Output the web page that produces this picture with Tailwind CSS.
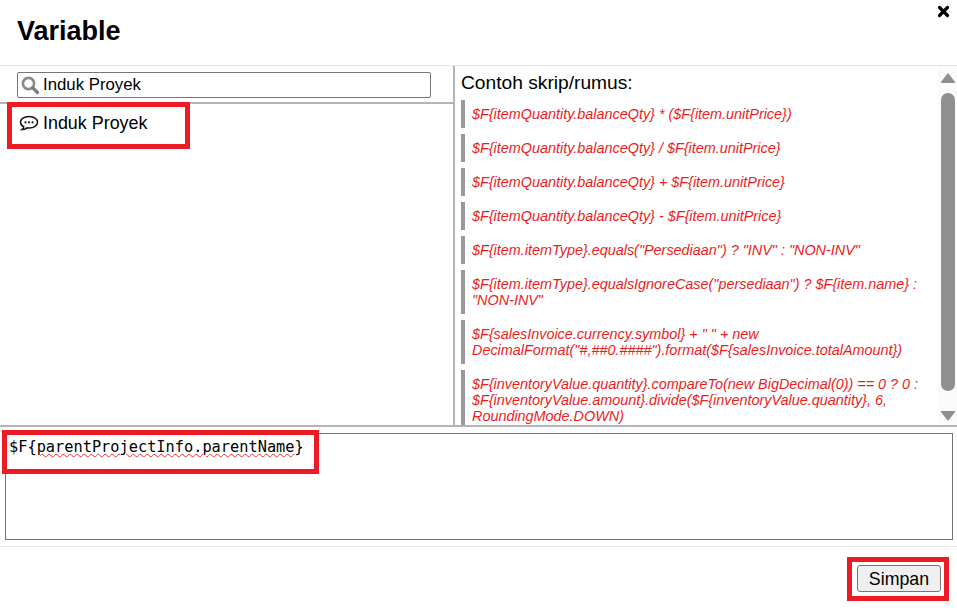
<!DOCTYPE html>
<html lang="en">
<head>
  <meta charset="UTF-8">
  <title>Variable</title>
  <script src="https://cdn.jsdelivr.net/npm/@tailwindcss/browser@4"></script>
</head>
<body class="bg-white text-black font-['Liberation_Sans',Arial,sans-serif] w-[957px] h-[608px] overflow-hidden">
  <div class="relative flex flex-col h-[608px]">

    <!-- Title -->
    <header class="relative h-[66px] shrink-0 border-b border-[#e5e5e5] pl-[17px] pt-[15px]">
      <h1 class="text-[27px] leading-[32px] font-bold">Variable</h1>
      <svg class="absolute right-[7px] top-[5px]" width="13" height="13" viewBox="0 0 13 13">
        <path d="M2.5 2.5 L10.5 10.5 M10.5 2.5 L2.5 10.5" stroke="#000" stroke-width="3.2" stroke-linecap="round"/>
      </svg>
    </header>

    <!-- Panes -->
    <div class="flex h-[361px] shrink-0 border-b-2 border-[#b4b4b4]">
      <div class="w-[455px] shrink-0 border-r-2 border-[#b4b4b4]">
        <div class="h-[38px] border-b-2 border-[#b4b4b4] pl-[17px] pr-[22px] pt-[6px]">
          <div class="flex items-center h-[26px] border border-[#767676] rounded-[2px] pl-[2px]">
            <svg width="20" height="20" viewBox="0 0 20 20" class="shrink-0">
              <circle cx="8.5" cy="8.500" r="5.600" fill="none" stroke="#8a8a8a" stroke-width="2.600"/>
              <path d="M12.8 12.8 L17.5 17.5" stroke="#7a7a7a" stroke-width="3.200" stroke-linecap="round"/>
            </svg>
            <span class="ml-[3px] text-[16.800px] leading-[20px]">Induk Proyek</span>
          </div>
        </div>
        <div class="flex items-center pl-[19px] pt-[8px]">
          <svg width="20" height="18" viewBox="0 0 20 18" class="shrink-0">
            <path d="M10 2.5 C5 2.5 1.5 5 1.5 8.3 C1.5 10.3 2.8 11.8 4.8 12.8 C4.6 14 3.8 15 3 15.6 C5 15.5 6.8 14.7 8 13.8 C8.7 14 9.3 14 10 14 C15 14 18.5 11.5 18.5 8.3 C18.5 5 15 2.5 10 2.5 Z" fill="none" stroke="#111" stroke-width="1.500"/>
            <circle cx="6.5" cy="8.3" r="1.100" fill="#111"/>
            <circle cx="10" cy="8.3" r="1.100" fill="#111"/>
            <circle cx="13.5" cy="8.3" r="1.100" fill="#111"/>
          </svg>
          <span class="ml-[4px] text-[17.900px] leading-[22px]">Induk Proyek</span>
        </div>
      </div>

      <!-- Examples -->
      <div class="flex-1 flex min-w-0">
        <div class="flex-1 min-w-0 overflow-hidden pl-[6px] pr-[18px] pt-[6px]">
          <h2 class="text-[19.200px] leading-[22px] mb-[6px]">Contoh skrip/rumus:</h2>
          <div class="flex flex-col gap-[6px] text-[14.400px] leading-[16px] italic text-[#ee1c1c]">
            <p class="border-l-4 border-[#999999] pl-[7px] py-[6px]">$F{itemQuantity.balanceQty} * ($F{item.unitPrice})</p>
            <p class="border-l-4 border-[#999999] pl-[7px] py-[6px]">$F{itemQuantity.balanceQty} / $F{item.unitPrice}</p>
            <p class="border-l-4 border-[#999999] pl-[7px] py-[6px]">$F{itemQuantity.balanceQty} + $F{item.unitPrice}</p>
            <p class="border-l-4 border-[#999999] pl-[7px] py-[6px]">$F{itemQuantity.balanceQty} - $F{item.unitPrice}</p>
            <p class="border-l-4 border-[#999999] pl-[7px] py-[6px]">$F{item.itemType}.equals("Persediaan") ? "INV" : "NON-INV"</p>
            <p class="border-l-4 border-[#999999] pl-[7px] py-[6px]">$F{item.itemType}.equalsIgnoreCase("persediaan") ? $F{item.name} : "NON-INV"</p>
            <p class="border-l-4 border-[#999999] pl-[7px] py-[6px]">$F{salesInvoice.currency.symbol} + " " + new DecimalFormat("#,##0.####").format($F{salesInvoice.totalAmount})</p>
            <p class="border-l-4 border-[#999999] pl-[7px] py-[6px]">$F{inventoryValue.quantity}.compareTo(new BigDecimal(0)) == 0 ? 0 : $F{inventoryValue.amount}.divide($F{inventoryValue.quantity}, 6, RoundingMode.DOWN)</p>
          </div>
        </div>
        <!-- Scrollbar -->
        <div class="w-[19px] shrink-0 bg-[#fafafa] flex flex-col items-center pt-[6px]">
          <svg width="16" height="12" viewBox="0 0 16 12" class="shrink-0"><path d="M8 1 L15 10 Q15.500 11 14.500 11 L1.500 11 Q0.500 11 1 10 Z" fill="#8f8f8f"/></svg>
          <div class="w-[14px] h-[298px] mt-[9px] rounded-[7px] bg-[#8f8f8f] shrink-0"></div>
          <svg width="16" height="12" viewBox="0 0 16 12" class="shrink-0 mt-[19px]"><path d="M8 11 L15 2 Q15.500 1 14.500 1 L1.500 1 Q0.500 1 1 2 Z" fill="#8f8f8f"/></svg>
        </div>
      </div>
    </div>

    <!-- Expression -->
    <div class="h-[120px] shrink-0 border-b border-[#e5e5e5] pl-[5px] pr-[4px] pt-[6px]">
      <div class="h-[107px] border border-[#767676] pl-[3px] pt-[4px] font-['DejaVu_Sans_Mono',monospace] text-[15.300px] leading-[18px]">
        $F{<span class="underline decoration-wavy decoration-[#f03030] decoration-1">parentProjectInfo.parentName</span>}
      </div>
    </div>

    <!-- Footer -->
    <footer class="flex justify-end pr-[16px] pt-[18px]">
      <button class="w-[84px] h-[27px] bg-[#efefef] border border-[#767676] rounded-[3px] text-[17.800px] leading-[20px]">Simpan</button>
    </footer>

    <!-- Screenshot annotations -->
    <div class="absolute left-[7px] top-[102px] w-[183px] h-[47px] border-[5px] border-[#ed1c24]"></div>
    <div class="absolute left-[2px] top-[430px] w-[317px] h-[44px] border-[5px] border-[#ed1c24]"></div>
    <div class="absolute left-[847px] top-[557px] w-[102px] h-[44px] border-[5px] border-[#ed1c24]"></div>
  </div>
</body>
</html>
